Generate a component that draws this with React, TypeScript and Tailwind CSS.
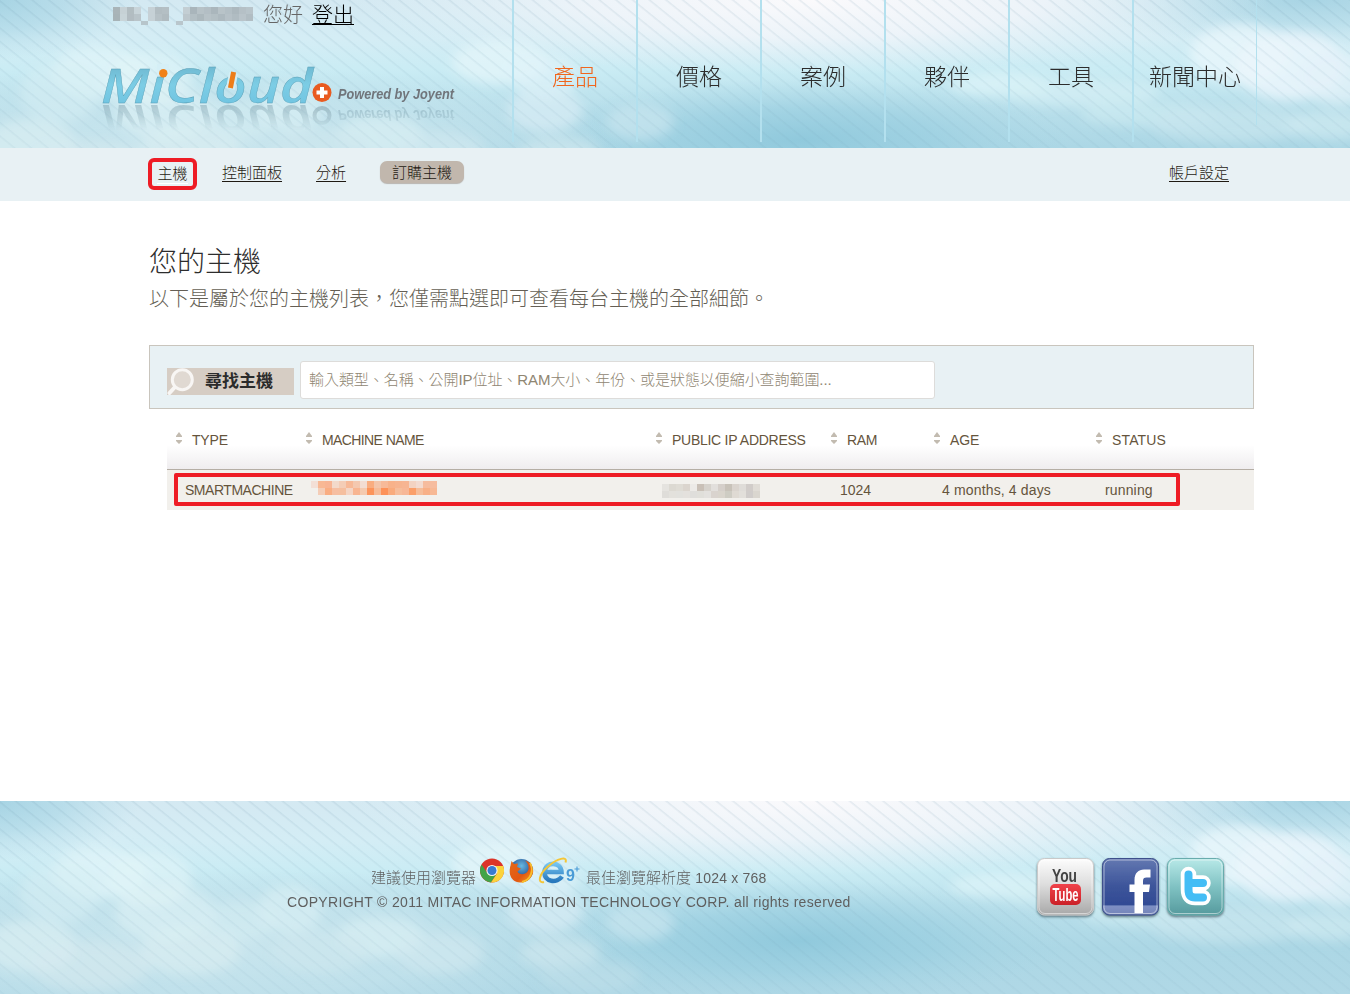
import React from "react";

const TC = "font-['Liberation_Sans','Noto_Sans_CJK_TC',sans-serif]";

function Sky({ id }: { id: string }) {
  const clouds: [number, number, number, number, string, number][] = [
    [100, 72, 48, 26, "#e0f4f8", 0.75],
    [150, 78, 42, 28, "#e0f4f8", 0.65],
    [165, 112, 50, 28, "#ddf2f5", 0.6],
    [60, 92, 40, 30, "#d6eff4", 0.6],
    [30, 145, 46, 26, "#dceff3", 0.65],
    [90, 165, 60, 24, "#d5eaef", 0.6],
    [190, 150, 50, 24, "#daeef2", 0.6],
    [240, 120, 36, 20, "#d9eff4", 0.45],
    [290, 108, 32, 24, "#d9f0f4", 0.65],
    [380, 136, 44, 20, "#d9eff3", 0.7],
    [440, 152, 44, 20, "#d2eaf0", 0.6],
    [320, 150, 50, 22, "#cfe8ee", 0.6],
    [500, 62, 48, 22, "#e4f5fa", 0.75],
    [545, 76, 34, 22, "#e0f2f9", 0.65],
    [545, 110, 38, 22, "#d9edf5", 0.7],
    [560, 152, 40, 16, "#cfe7ee", 0.7],
    [640, 122, 34, 18, "#cbe6ef", 0.65],
    [590, 175, 50, 16, "#bfe0ea", 0.6],
    [1000, 84, 50, 12, "#def4f8", 0.75],
    [1080, 92, 80, 14, "#d5f0f5", 0.7],
    [1240, 54, 50, 30, "#e9f6fb", 0.8],
    [1290, 66, 56, 34, "#eaf5fb", 0.85],
    [1340, 78, 40, 26, "#e3f2f8", 0.75],
    [1150, 114, 70, 12, "#cbeaf0", 0.75],
    [1230, 124, 80, 18, "#c8e6ee", 0.7],
    [1330, 125, 44, 14, "#cfeaf1", 0.7],
  ];
  return (
    <svg className="absolute inset-0 h-full w-full" viewBox="0 0 1350 193" preserveAspectRatio="xMidYMin slice" aria-hidden="true">
      <defs>
        <linearGradient id={id + "v"} x1="0" y1="0" x2="0" y2="1">
          <stop offset="0" stopColor="#d4e9f2" />
          <stop offset="0.2" stopColor="#d4edf5" />
          <stop offset="0.36" stopColor="#caecf4" />
          <stop offset="0.58" stopColor="#b7deea" />
          <stop offset="0.76" stopColor="#acd7e5" />
          <stop offset="1" stopColor="#b0d8e6" />
        </linearGradient>
        <radialGradient id={id + "w"}>
          <stop offset="0" stopColor="#fbfafc" />
          <stop offset="0.5" stopColor="#f1f5fa" stopOpacity="0.85" />
          <stop offset="1" stopColor="#e4f2f8" stopOpacity="0" />
        </radialGradient>
        <radialGradient id={id + "d"}>
          <stop offset="0" stopColor="#90c9dc" />
          <stop offset="0.5" stopColor="#98cee0" stopOpacity="0.65" />
          <stop offset="1" stopColor="#a5d5e4" stopOpacity="0" />
        </radialGradient>
        <radialGradient id={id + "p"}>
          <stop offset="0" stopColor="#cae6ee" />
          <stop offset="0.6" stopColor="#c6e4ed" stopOpacity="0.7" />
          <stop offset="1" stopColor="#c4e3ec" stopOpacity="0" />
        </radialGradient>
        <filter id={id + "b"} x="-20%" y="-40%" width="140%" height="180%">
          <feGaussianBlur stdDeviation="6" />
        </filter>
        <pattern id={id + "s"} width="16" height="10.5" patternUnits="userSpaceOnUse" patternTransform="rotate(39)">
          <rect width="16" height="1.5" fill="#6e96a8" fillOpacity="0.14" />
        </pattern>
        <linearGradient id={id + "f"} x1="0" y1="0" x2="0" y2="1">
          <stop offset="0" stopColor="#fff" />
          <stop offset="0.4" stopColor="#fff" stopOpacity="0.7" />
          <stop offset="1" stopColor="#fff" stopOpacity="0.45" />
        </linearGradient>
        <mask id={id + "m"}>
          <rect width="1350" height="193" fill={`url(#${id}f)`} />
        </mask>
      </defs>
      <rect width="1350" height="193" fill={`url(#${id}v)`} />
      <ellipse cx="-10" cy="0" rx="150" ry="60" fill={`url(#${id}d)`} opacity="0.7" />
      <ellipse cx="1310" cy="0" rx="230" ry="48" fill={`url(#${id}d)`} opacity="0.65" />
      <ellipse cx="810" cy="0" rx="460" ry="75" fill={`url(#${id}w)`} />
      <ellipse cx="800" cy="140" rx="270" ry="62" fill={`url(#${id}d)`} />
      <ellipse cx="200" cy="145" rx="420" ry="80" fill={`url(#${id}p)`} />
      <g filter={`url(#${id}b)`}>
        {clouds.map(([cx, cy, rx, ry, fill, opacity], i) => (
          <ellipse key={i} cx={cx} cy={cy} rx={rx} ry={ry} fill={fill} opacity={opacity} />
        ))}
      </g>
      <rect width="1350" height="193" fill={`url(#${id}s)`} mask={`url(#${id}m)`} />
    </svg>
  );
}

function Mosaic({ rows, w, h }: { rows: string[][]; w: number; h: number }) {
  return (
    <div className="flex flex-col">
      {rows.map((r, i) => (
        <div key={i} className="flex">
          {r.map((c, j) => (
            <div key={j} style={{ width: w, height: h, backgroundColor: c || "transparent" }} />
          ))}
        </div>
      ))}
    </div>
  );
}

const G = (s: string) => s.split(" ").map((c) => (c === "-" ? "" : "#" + c));

const userRows = [
  G("a9b4b8 c6d1d5 b2bdc1 c8d4d9 - c6d1d6 b2bdc2 b4bfc4 - - c3ced3 a9b5bb b7c2c7 b3bec4 aab6bc b8c3c8 b3bfc5 acb8be b5c0c6 b8c4ca"),
  G("a7b3b7 c8d4d8 b2bcc1 b9c4c9 - c6d1d6 b6c1c6 b0bbc0 - - bcc7cc b3bfc4 acb8bd b7c2c7 b3bfc4 adb9bf b6c1c7 b0bcc2 b9c4ca b1bdc3"),
];
const userTail = [G("- - - - b7c5cb - - - - b9c6cc")];
const nameRows = [
  G("f3dfd6 f8b894 f8b493 f3d9ca f4cdb6 f7b997 f4c8af f3ddd2 f9ad80 f4c5aa f7ba99 f8b28a f7b48f f7b592 f3d3c2 f3dbd0 f6bc9e f6bc9e"),
  G("- f4cdb7 f9ad82 f6bea1 f5bf9f f4d5c5 f8b591 f4caaf fc945b f6bb98 fd9259 f9ab7d f6bd9b f7b796 fb9f69 f6bd99 f8b087 f7b894"),
];
const ipRows = [
  G("e5e3df dcd9d2 dfdcd5 dbd5ce eceae7 c9c0b7 d6d2cc e2dfdc d5cfca c8c2b9 dad4ce dfdcd8 d1ccc9 e0dcd6"),
  G("dfddd9 e3e1dc e2e1dd e4e1dd dfdedb e0dfda e3e1de d9d3ce d9d4cc ceccc3 dfdad3 e2dfda d0ccca dad6cf"),
];

function LogoArt() {
  return (
    <svg className="block" width="370" height="97" viewBox="95 38 370 97" role="img" aria-label="MiCloud Powered by Joyent">
      <defs>
        <linearGradient id="lg" x1="0" y1="0" x2="0" y2="1">
          <stop offset="0.2" stopColor="#6fb9d1" />
          <stop offset="0.5" stopColor="#7ccde5" />
          <stop offset="1" stopColor="#69bfdf" />
        </linearGradient>
        <linearGradient id="rf" x1="0" y1="104" x2="0" y2="78" gradientUnits="userSpaceOnUse">
          <stop offset="0" stopColor="#fff" stopOpacity="0.4" />
          <stop offset="0.5" stopColor="#fff" stopOpacity="0.22" />
          <stop offset="1" stopColor="#fff" stopOpacity="0" />
        </linearGradient>
        <mask id="rm" maskUnits="userSpaceOnUse" x="90" y="60" width="400" height="50"><rect x="90" y="60" width="400" height="50" fill="url(#rf)" /></mask>
        <filter id="rb" x="-5%" y="-20%" width="110%" height="140%"><feGaussianBlur stdDeviation="0.7" /></filter>
        <text id="wordmark" x="101" y="103" textLength="212" lengthAdjust="spacingAndGlyphs" fontFamily="Open Sans, sans-serif" fontStyle="italic" fontWeight="600" fontSize="47">MiCloud</text>
        <text id="tagline" x="338" y="98.500" textLength="116" lengthAdjust="spacingAndGlyphs" fontFamily="Liberation Sans, sans-serif" fontSize="14" fontStyle="italic" fontWeight="700">Powered by Joyent</text>
      </defs>
      <g transform="translate(0 208) scale(1 -1)" filter="url(#rb)" aria-hidden="true">
        <g mask="url(#rm)" fill="#6b8f9d">
          <use href="#wordmark" />
          <use href="#tagline" />
          <circle cx="322" cy="92.500" r="7.500" fill="none" stroke="#5f7d88" strokeWidth="4" />
        </g>
      </g>
      <use href="#wordmark" fill="url(#lg)" stroke="#579db4" strokeWidth="0.35" />
      <path d="M157 64h12v11h-12z" fill="#d5eff6" />
      <circle cx="163.300" cy="73.300" r="4.200" fill="#f18218" />
      <path d="m233.600 73-3.200 16" stroke="#d3eef5" strokeWidth="9" />
      <path d="m233.600 72-3.200 16" stroke="#ed7d19" strokeWidth="5" />
      <circle cx="322" cy="92.500" r="9.500" fill="#e95b20" />
      <path d="M322 87v11M316.500 92.500h11" stroke="#fff" strokeWidth="4" />
      <use href="#tagline" fill="#70757b" />
    </svg>
  );
}

function Browsers() {
  return (
    <svg className="block shrink-0" width="106" height="30" viewBox="478 856 106 30" aria-label="Chrome, Firefox, Internet Explorer 9+">
      <defs>
        <radialGradient id="ff" cx="0.5" cy="0.3" r="0.6">
          <stop offset="0" stopColor="#68b9e2" />
          <stop offset="1" stopColor="#153b82" />
        </radialGradient>
        <linearGradient id="fx" x1="0" y1="0" x2="1" y2="1">
          <stop offset="0" stopColor="#e66a17" />
          <stop offset="0.6" stopColor="#e25712" />
          <stop offset="1" stopColor="#f7a41d" />
        </linearGradient>
        <linearGradient id="ie" x1="0" y1="0" x2="0" y2="1">
          <stop offset="0" stopColor="#74c4f0" />
          <stop offset="1" stopColor="#2878bd" />
        </linearGradient>
      </defs>
      <circle cx="492" cy="870.500" r="12" fill="#dc3428" />
      <path d="M481.600 864.500A12 12 0 0 0 491 882.500L496.500 874 487.300 873Z" fill="#42a447" />
      <path d="M503.200 866A12 12 0 0 1 491 882.500L497 873.500 495 866Z" fill="#fbd33c" />
      <circle cx="492" cy="870.500" r="5.600" fill="#f4f6f7" />
      <circle cx="492" cy="870.500" r="4.500" fill="#387bd2" />
      <circle cx="521.500" cy="870.500" r="11.500" fill="url(#ff)" />
      <path d="M511.500 861 514 864 518 863.500 517 867 521 868.500 517.500 871.500C519 875 525 875 527.500 871.500 530 868 528 863 525 860.500 531 862 534 868 533 873 531 880 525 883 520 882.500 512 882 508.500 875 510 868Z" fill="url(#fx)" />
      <path d="M530 863C534 870 531 880 522 882" fill="none" stroke="#f9bd2d" strokeWidth="1.800" />
      <path d="M546 872H561.500C561 861.500 546 861 544.500 871.500 544 883 557.500 883 562 876.500" fill="none" stroke="url(#ie)" strokeWidth="4.600" />
      <path d="M544 882C537 884 539 874 548 866.500 557 858.500 568 855.500 565.500 862.500" fill="none" stroke="#f5c637" strokeWidth="2" />
      <text x="566" y="881" fontFamily="Liberation Sans, sans-serif" fontWeight="700" fontSize="16" fill="#4a9bd6">9</text>
      <path d="M577 866.500v5M574.500 869h5" stroke="#4a9bd6" strokeWidth="1.100" />
    </svg>
  );
}

function Social() {
  return (
    <svg className="block" width="194" height="66" viewBox="1034 855 194 66" aria-label="YouTube, Facebook, Twitter">
      <defs>
        <linearGradient id="yt" x1="0" y1="0" x2="0" y2="1"><stop offset="0" stopColor="#fdfdfd" /><stop offset="0.45" stopColor="#dedede" /><stop offset="1" stopColor="#a8a8a8" /></linearGradient>
        <linearGradient id="fb" x1="0" y1="0" x2="0" y2="1"><stop offset="0" stopColor="#6378b1" /><stop offset="0.5" stopColor="#3c549a" /><stop offset="0.82" stopColor="#324b94" /><stop offset="0.84" stopColor="#7e90c4" /><stop offset="1" stopColor="#7484b8" /></linearGradient>
        <linearGradient id="tw" x1="0" y1="0" x2="0" y2="1"><stop offset="0" stopColor="#b8e9e8" /><stop offset="0.5" stopColor="#80c2c3" /><stop offset="1" stopColor="#559a9d" /></linearGradient>
        <linearGradient id="rd" x1="0" y1="0" x2="0" y2="1"><stop offset="0" stopColor="#f0424a" /><stop offset="1" stopColor="#cb2027" /></linearGradient>
        <filter id="sh" x="-10%" y="-10%" width="120%" height="130%"><feDropShadow dx="0" dy="1.500" stdDeviation="1" floodColor="#324b55" floodOpacity="0.7" /></filter>
      </defs>
      <g filter="url(#sh)">
        <rect x="1037.500" y="858.500" width="56" height="56.500" rx="7" fill="url(#yt)" stroke="#c9c9c9" />
        <rect x="1102.500" y="858.500" width="56" height="56.500" rx="7" fill="url(#fb)" stroke="#3c4f8b" />
        <rect x="1167.500" y="858.500" width="56" height="56.500" rx="7" fill="url(#tw)" stroke="#68acad" />
      </g>
      <g fill="none" strokeOpacity="0.5" stroke="#fff">
        <rect x="1039" y="860" width="53" height="53.500" rx="6" />
        <rect x="1104" y="860" width="53" height="53.500" rx="6" />
        <rect x="1169" y="860" width="53" height="53.500" rx="6" />
      </g>
      <g fontFamily="Liberation Sans, sans-serif" fontWeight="700">
        <text x="1052" y="882" fontSize="18" textLength="25" lengthAdjust="spacingAndGlyphs" fill="#424242">You</text>
        <rect x="1050" y="884" width="31" height="21" rx="5" fill="url(#rd)" />
        <text x="1052.500" y="901" fontSize="18" textLength="26" lengthAdjust="spacingAndGlyphs" fill="#fff">Tube</text>
      </g>
      <path d="M1134.500 913V892H1129.500V884.500H1134.500V880C1134.500 873 1138.500 869.500 1144 869.500H1150.500V877.500H1146.500C1144 877.500 1143 878.500 1143 881V884.500H1150L1149 892H1143V913Z" fill="#fff" />
      <g fill="none" strokeLinecap="round" strokeLinejoin="round">
        <path d="M1188.500 874.500V889.500C1188.500 895.500 1191 897.500 1195 897.500H1203M1188.500 883H1203" stroke="#fff" strokeWidth="15.500" />
        <path d="M1188.500 874.500V889.500C1188.500 895.500 1191 897.500 1195 897.500H1203M1188.500 883H1203" stroke="#44bdf5" strokeWidth="8" />
      </g>
    </svg>
  );
}

function Sort() {
  return (
    <svg className="mr-[10px] mb-1 block shrink-0" width="6" height="12" viewBox="0 0 6 12" aria-hidden="true">
      <path d="M3 0 6 4V5H0V4ZM3 12 6 9V8H0V9Z" fill="#c2bbb0" />
    </svg>
  );
}

const columns = [
  { label: "TYPE", w: "w-[130px]", t: "tracking-[-0.2px]" },
  { label: "MACHINE NAME", w: "w-[350px]", t: "tracking-[-0.6px]" },
  { label: "PUBLIC IP ADDRESS", w: "w-[175px]", t: "tracking-[-0.27px]" },
  { label: "RAM", w: "w-[103px]", t: "tracking-[-0.4px]" },
  { label: "AGE", w: "w-[162px]", t: "tracking-[-0.1px]" },
  { label: "STATUS", w: "w-[140px]", t: "tracking-[0.15px]" },
];

const nav = ["產品", "價格", "案例", "夥伴", "工具", "新聞中心"];

export default function App() {
  return (
    <div className={`flex h-[994px] w-[1350px] flex-col overflow-hidden bg-white font-light text-[#65543c] ${TC}`}>
      <header className="relative h-[148px] shrink-0 overflow-hidden">
        <Sky id="top" />
        <div className="relative flex h-full">
          <div className="w-[512px] shrink-0">
            <div className="flex h-[30px] pl-[113px] text-[#666]">
              <div className="w-[150px] pt-[7px]">
                <Mosaic rows={userRows} w={7} h={7} />
                <Mosaic rows={userTail} w={7} h={4} />
              </div>
              <span className="text-[20px] leading-[30px]">您好</span>
              <a className="ml-[9px] text-[21px] leading-[30px] text-black underline decoration-1 underline-offset-[2px]">登出</a>
            </div>
            <div className="pt-[8px] pl-[95px]"><LogoArt /></div>
          </div>
          <nav className="flex h-[142px]">
            {nav.map((n, i) => (
              <div key={n} className={`flex w-[124px] shrink-0 justify-center border-l-2 border-[#b3e0ee] pt-[60px] text-[23px] leading-[34px] whitespace-nowrap ${i === 0 ? "text-[#f0661e]" : "text-[#2c2c2c]"}`}>
                {n}
              </div>
            ))}
            <div className="h-[125px] w-px bg-[#b3e0ee]" />
          </nav>
        </div>
      </header>

      <div className="flex h-[53px] shrink-0 items-start bg-[#e8f1f4] pr-[121px] pl-[148px] text-[15px] leading-[24px] text-[#1f1a12]">
        <a className="mt-[10px] flex h-[32px] w-[49px] items-center justify-center rounded-[6px] border-4 border-[#ee1c25]"><span className="border-b border-white leading-[18px]">主機</span></a>
        <a className="mt-[13px] ml-[25px] underline decoration-1 underline-offset-[3px]">控制面板</a>
        <a className="mt-[13px] ml-[34px] underline decoration-1 underline-offset-[3px]">分析</a>
        <a className="mt-[13px] ml-[34px] flex h-[22px] w-[84px] items-center justify-center rounded-[7px] bg-[#c1b7ad] pt-[2px] shadow-[0_1px_1px_#b8b4b0]">訂購主機</a>
        <a className="mt-[13px] ml-auto underline decoration-1 underline-offset-[3px]">帳戶設定</a>
      </div>

      <main className="h-[600px] shrink-0 pl-[149px]">
        <h1 className="pt-[42px] text-[28px] leading-[40px] text-[#2d2d2d]">您的主機</h1>
        <p className="text-[20px] leading-[32px] text-[#655f55]">以下是屬於您的主機列表，您僅需點選即可查看每台主機的全部細節。</p>

        <section className="mt-[30px] flex h-[64px] w-[1105px] items-start border border-[#c9c5bd] bg-[#e8f1f4] pl-[17px]">
          <div className="mt-[22px] flex h-[27px] w-[127px] items-center bg-[#d6cdc4]">
            <svg className="block shrink-0" width="30" height="27" viewBox="0 0 30 27" aria-hidden="true">
              <path d="M8 19 2.500 25" stroke="#f8f6f4" strokeWidth="4" strokeLinecap="round" />
              <circle cx="15.300" cy="11.700" r="10" fill="#e0d9d2" stroke="#f8f6f4" strokeWidth="3" />
            </svg>
            <span className="ml-[8px] text-[17px] leading-[27px] font-bold text-[#2b2b2b]">尋找主機</span>
          </div>
          <div className="mt-[15px] ml-[6px] flex h-[38px] w-[635px] items-center rounded-[3px] border border-[#dddcda] bg-white pl-[8px] text-[15px] whitespace-nowrap text-[#8f8672]">
            <span className="pt-px tracking-[-0.06px]">輸入類型、名稱、公開IP位址、RAM大小、年份、或是狀態以便縮小查詢範圍...</span>
          </div>
        </section>

        <section className="relative ml-[18px] w-[1087px] text-[14px]">
          <div className="flex h-[61px] border-b border-[#b5aea5] bg-[linear-gradient(#fff_60%,#efedef)] pt-[21px] pl-[9px]">
            {columns.map((c) => (
              <div key={c.label} className={`flex h-[20px] shrink-0 items-center whitespace-nowrap ${c.w}`}>
                <Sort />
                <span className={c.t}>{c.label}</span>
              </div>
            ))}
          </div>
          <div className="flex h-[40px] bg-[#f2f0ec] pl-[18px] leading-[40px] whitespace-nowrap">
            <span className="w-[126px] tracking-[-0.47px]">SMARTMACHINE</span>
            <div className="w-[351px] pt-[11px]"><Mosaic rows={nameRows} w={7} h={7} /></div>
            <div className="w-[178px] pt-[14px]"><Mosaic rows={ipRows} w={7} h={7} /></div>
            <span className="w-[102px]">1024</span>
            <span className="w-[163px] tracking-[0.15px]">4 months, 4 days</span>
            <span className="tracking-[0.15px]">running</span>
          </div>
          <div className="pointer-events-none absolute top-[64px] left-[7px] h-[33px] w-[1006px] rounded-[2px] border-4 border-[#ee1c25]" />
        </section>
      </main>

      <footer className="relative h-[193px] shrink-0 overflow-hidden text-[#5f5f5f]">
        <Sky id="bottom" />
        <div className="relative flex h-full">
          <div className="w-[852px] shrink-0 pt-[55px] pl-[287px]">
            <div className="flex h-[34px] items-start pl-[84px] text-[15px] leading-[24px] whitespace-nowrap">
              <span className="pt-[10px]">建議使用瀏覽器</span>
              <div className="ml-[2px]"><Browsers /></div>
              <span className="ml-[2px] pt-[10px]">最佳瀏覽解析度 <span className="text-[14px] tracking-[0.2px]">1024 x 768</span></span>
            </div>
            <p className="text-[14px] leading-[24px] tracking-[0.325px] whitespace-nowrap">COPYRIGHT © 2011 MITAC INFORMATION TECHNOLOGY CORP. all rights reserved</p>
          </div>
          <div className="ml-[182px] pt-[54px]"><Social /></div>
        </div>
      </footer>
    </div>
  );
}
